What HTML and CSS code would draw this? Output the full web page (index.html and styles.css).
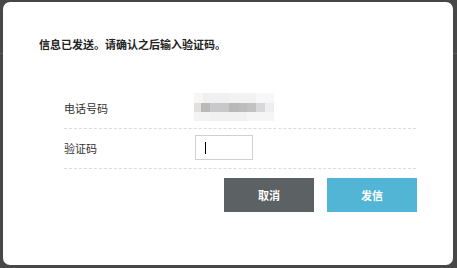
FILE: index.html
```html
<!DOCTYPE html>
<html lang="zh">
<head>
<meta charset="utf-8">
<title>验证码</title>
<link rel="stylesheet" href="styles.css">
</head>
<body>
<div class="modal">
  <p class="title">信息已发送。请确认之后输入验证码。</p>
  <div class="form">
    <div class="row">
      <div class="label">电话号码</div>
      <div class="value"><div class="blur"><div class="blur-top"></div><div class="blur-mid"></div><div class="blur-bot"></div></div></div>
    </div>
    <div class="row">
      <div class="label">验证码</div>
      <div class="value"><div class="input"><span class="caret"></span></div></div>
    </div>
  </div>
  <div class="actions">
    <button class="btn btn-cancel">取消</button>
    <button class="btn btn-send">发信</button>
  </div>
</div>
</body>
</html>
```
FILE: styles.css
```css
html, body {
  margin: 0;
  padding: 0;
}
body {
  width: 457px;
  height: 268px;
  overflow: hidden;
  background: linear-gradient(to bottom, #474747 0, #474747 53px, #5c5c5c 53px, #5c5c5c 54px, #474747 54px);
  font-family: "Noto Sans CJK SC", "Noto Sans", sans-serif;
  padding-top: 2px;
  box-sizing: border-box;
}
.modal {
  margin-left: 3px;
  width: 450px;
  height: 263px;
  background: #fff;
  border-radius: 7px;
  box-sizing: border-box;
  padding: 34px 36px 0 36px;
}
.title {
  margin: 0;
  font-size: 11px;
  line-height: 16px;
  font-weight: bold;
  color: #222;
}
.form {
  margin-top: 37px;
  margin-left: 25px;
  width: 352px;
}
.row {
  display: flex;
  align-items: center;
  height: 39px;
  border-bottom: 1px dashed #dcdcdc;
}
.label {
  width: 130px;
  font-size: 11px;
  color: #333;
  line-height: 16px;
  margin-top: -2px;
}
.value {
  display: flex;
  align-items: center;
}
.blur {
  width: 80px;
  height: 28px;
  display: flex;
  flex-direction: column;
  margin-top: -3px;
}
.blur-top {
  height: 10px;
  background: linear-gradient(to right, #f6f6f6 0, #f6f6f6 9px, #f0f0f0 9px, #f0f0f0 35px, #f2f2f2 35px, #f2f2f2 62px, #f7f7f7 62px);
}
.blur-mid {
  height: 9px;
  background: linear-gradient(to right, #e3dfdf 0, #e3dfdf 7px, #b9b9b9 7px, #b9b9b9 16px, #c9c9cc 16px, #c9c9cc 25px, #c8c8c8 25px, #c8c8c8 35px, #b8b8b8 35px, #b8b8b8 45px, #bdbdbd 45px, #bdbdbd 53px, #c2c2c2 53px, #c2c2c2 62px, #d8d8dc 62px, #d8d8dc 71px, #eeeeee 71px);
}
.blur-bot {
  height: 9px;
  background: linear-gradient(to right, #f3f3f3 0, #f3f3f3 16px, #f1f1f1 16px, #f1f1f1 53px, #f5f5f5 53px);
}
.input {
  width: 58px;
  height: 25px;
  border: 1px solid #d0d0d0;
  box-sizing: border-box;
  display: flex;
  align-items: center;
  padding-left: 9px;
  margin-left: 1px;
  margin-top: -2px;
}
.caret {
  display: block;
  width: 1px;
  height: 12px;
  background: #000;
}
.actions {
  display: flex;
  justify-content: flex-end;
  gap: 13px;
  margin-top: 9px;
  width: 378px;
}
.btn {
  width: 90px;
  height: 34px;
  border: none;
  padding: 0;
  font-family: "Noto Sans CJK SC", "Noto Sans", sans-serif;
  font-size: 11px;
  font-weight: bold;
  color: #fff;
}
.btn-cancel {
  background: #5c6163;
}
.btn-send {
  background: #52b5d5;
}
```
